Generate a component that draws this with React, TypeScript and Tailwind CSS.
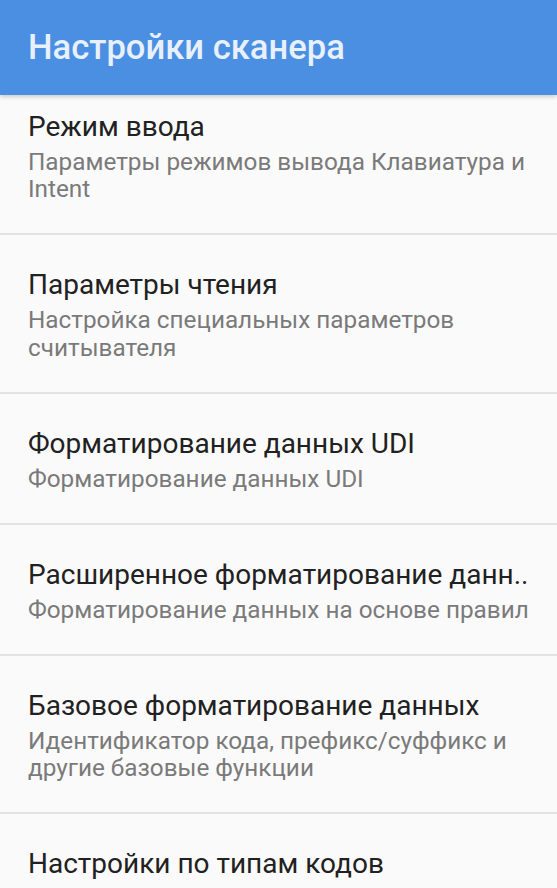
import React from "react";

const items: { title: string; summary?: string }[] = [
  { title: "Режим ввода", summary: "Параметры режимов вывода Клавиатура и Intent" },
  { title: "Параметры чтения", summary: "Настройка специальных параметров считывателя" },
  { title: "Форматирование данных UDI", summary: "Форматирование данных UDI" },
  { title: "Расширенное форматирование данн..", summary: "Форматирование данных на основе правил" },
  { title: "Базовое форматирование данных", summary: "Идентификатор кода, префикс/суффикс и другие базовые функции" },
  { title: "Настройки по типам кодов" },
];

export default function App() {
  return (
    <div
      className="w-[557px] h-[888px] overflow-hidden bg-[#fafafa] flex flex-col"
      style={{ fontFamily: "Roboto, 'Noto Sans', sans-serif" }}
    >
      <div className="relative z-10 h-[95px] shrink-0 bg-[#4a8fe2] flex items-center pl-[28px] shadow-[0_2px_4px_rgba(0,0,0,0.18)]">
        <span className="text-[34.6px] font-medium text-[#e8f0fc] leading-none">
          Настройки сканера
        </span>
      </div>
      <div className="flex-1 overflow-hidden">
        <div className="mt-[-18.5px]">
          {items.map((it, i) => (
            <div key={i} className={it.summary ? "border-b-2 border-[#e3e3e3]" : ""}>
              <div className="pl-[28px] pr-[20px] pt-[33px] pb-[30.5px]">
                <div className="text-[28px] leading-[33px] text-[#212121] whitespace-nowrap">
                  {it.title}
                </div>
                {it.summary && (
                  <div className="mt-[5px] pr-[4px] text-[24.3px] leading-[27.5px] text-[#7a7a7a]">
                    {it.summary}
                  </div>
                )}
              </div>
            </div>
          ))}
        </div>
      </div>
    </div>
  );
}
